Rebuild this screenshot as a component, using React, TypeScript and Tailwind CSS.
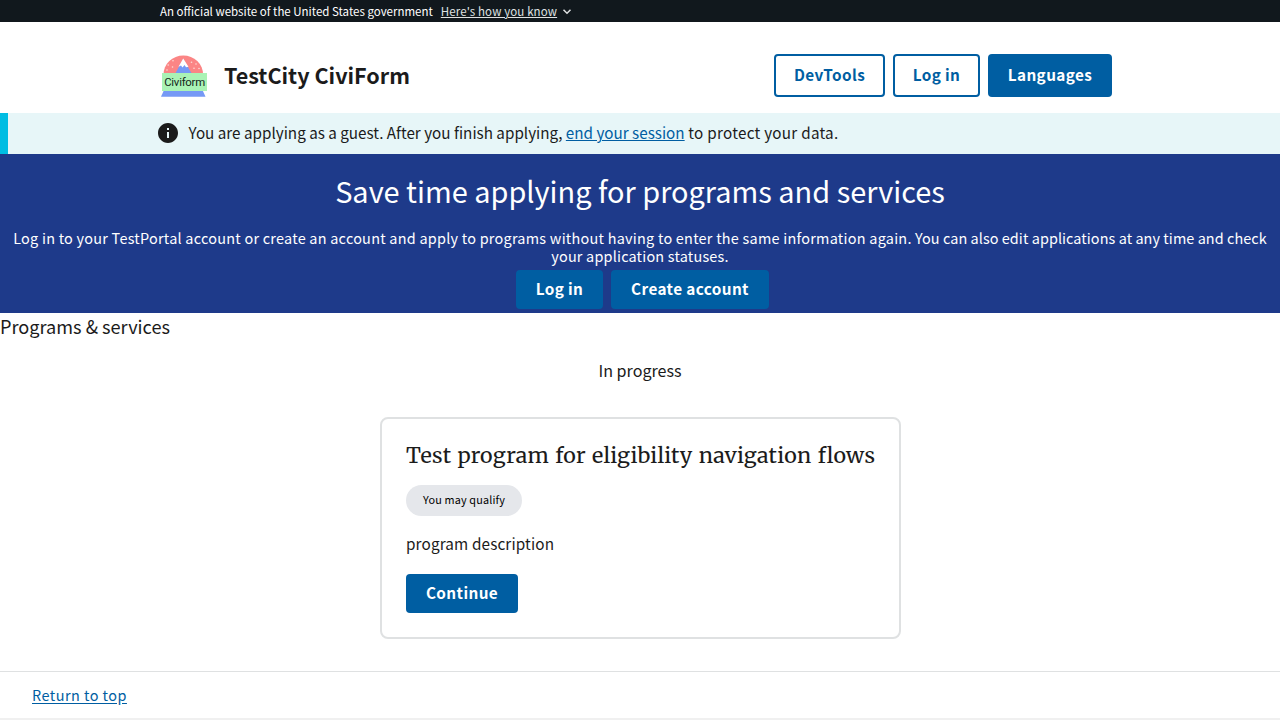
import type { ReactNode } from "react";

function Button({ children, outline = false, className = "" }: { children: ReactNode; outline?: boolean; className?: string }) {
  return (
    <button
      type="button"
      className={`flex items-center justify-center rounded-[4px] pb-[2px] text-[15.3px] leading-none font-bold tracking-[0.4px] whitespace-nowrap ${
        outline ? "border-2 border-[#005ea2] bg-white text-[#005ea2]" : "bg-[#005ea2] text-white"
      } ${className}`}
    >
      {children}
    </button>
  );
}

function Logo() {
  return (
    <svg className="h-[43px] w-12 shrink-0" viewBox="0 0 48 43" role="img" aria-label="CiviForm">
      <path d="M3.5 20.5a19.8 19 0 0 1 39.6 0z" fill="#fb8585" />
      <g fill="#fcdcd6">
        <circle cx="13" cy="6.8" r=".8" />
        <circle cx="8.2" cy="11" r=".8" />
        <circle cx="12.5" cy="13" r=".8" />
        <circle cx="7" cy="16" r=".8" />
        <circle cx="31.5" cy="8.2" r=".8" />
        <circle cx="36" cy="10" r=".8" />
        <circle cx="34" cy="14.3" r=".8" />
        <circle cx="39" cy="14.5" r=".8" />
      </g>
      <path d="M15 20 23.2 5 32 20z" fill="#7699f5" />
      <path d="M23.2 4.5 18.5 12.8 21 11.5 22.5 13.5 24.5 11 26 13.3 28.5 12.8z" fill="#fff" />
      <path d="M4 36h38.5l3 6.7h-44.5z" fill="#7699f5" />
      <path d="M2 19h45v18H2z" fill="#aaf3b5" />
      <text x="4.2" y="31.6" fontSize="11.4" textLength="41" fill="#15251a" className="font-['Roboto','Liberation_Sans',sans-serif]">
        Civiform
      </text>
    </svg>
  );
}

export default function App() {
  return (
    <div className="flex h-[720px] flex-col overflow-hidden bg-white font-['Noto_Sans_CJK_SC',sans-serif] text-[#1b1b1b]">
      <div className="flex h-[22px] items-center gap-2 bg-[#11181d] pl-40 text-[11.5px] leading-[22px] whitespace-nowrap text-white">
        <span>An official website of the United States government</span>
        <span className="flex items-center">
          <a href="#" className="tracking-[0.12px] text-[#dfe1e2] underline underline-offset-1">Here's how you know</a>
          <svg className="ml-1 size-3" viewBox="0 0 12 12" fill="none" stroke="#dfe1e2" strokeWidth="1.5">
            <path d="M2.5 4.7 6 8.2l3.5-3.5" />
          </svg>
        </span>
      </div>

      <header className="flex h-[91px] items-start justify-between pt-8 pr-[168px] pl-40">
        <div className="flex h-[43px] items-center gap-4">
          <Logo />
          <span className="pb-[2px] text-[21.55px] leading-none font-bold">TestCity CiviForm</span>
        </div>
        <nav className="flex gap-2">
          <Button outline className="h-[43px] w-[111px]">DevTools</Button>
          <Button outline className="h-[43px] w-[87px]">Log in</Button>
          <Button className="h-[43px] w-[124px]">Languages</Button>
        </nav>
      </header>

      <section className="flex h-[41px] items-start border-l-8 border-[#00bde3] bg-[#e7f6f8] pt-2 pl-[148px]">
        <svg className="size-6 shrink-0" viewBox="0 0 24 24" fill="#1b1b1b">
          <path d="M12 2C6.48 2 2 6.48 2 12s4.48 10 10 10 10-4.48 10-10S17.52 2 12 2zm1 15h-2v-6h2v6zm0-8h-2V7h2v2z" />
        </svg>
        <p className="-mt-px ml-[8.5px] text-[15.24px] leading-[24px] whitespace-nowrap">
          You are applying as a guest. After you finish applying,{" "}
          <a href="#" className="text-[#005ea2] underline underline-offset-1">end your session</a>
          <span className="tracking-[0.26px]"> to protect your data.</span>
        </p>
      </section>

      <section className="h-[159px] bg-[#1e3a8a] text-center text-white">
        <h1 className="pt-[18px] text-[28.92px] leading-9">Save time applying for programs and services</h1>
        <p className="mt-[21px] text-[14.44px] leading-[18px] tracking-[0.19px] whitespace-nowrap">
          <span className="tracking-[0.24px]">
            Log in to your TestPortal account or create an account and apply to programs without having to enter the same information again.
          </span>
          <span className="tracking-[0.06px]"> You can also edit applications at any time and check</span>
          <br />
          your application statuses.
        </p>
        <div className="mt-[5px] flex justify-center gap-2 pl-[5px]">
          <Button className="h-[39px] w-[87px]">Log in</Button>
          <Button className="h-[39px] w-[158px]">Create account</Button>
        </div>
      </section>

      <main className="flex flex-col">
        <h2 className="h-7 text-[18.15px] leading-[26px]">Programs & services</h2>
        <h3 className="mt-4 h-7 text-center text-[16.08px] leading-[26px]">In progress</h3>
        <article className="mt-8 ml-[380px] flex h-[222px] w-[521px] flex-col items-start rounded-lg border-2 border-[#dfe1e2] px-6 pt-6">
          <h4 className="h-[26px] font-['Merriweather','Noto_Serif','DejaVu_Serif',serif] text-[21.44px] leading-[26px] font-normal tracking-[0.2px] [word-spacing:1px] whitespace-nowrap">
            Test program for eligibility navigation flows
          </h4>
          <span className="mt-4 flex h-[31px] w-[116px] items-center justify-center rounded-full bg-[#e5e7eb] pb-[2px] text-[10.83px] leading-none tracking-[0.16px] text-black">
            You may qualify
          </span>
          <p className="mt-4 h-[26px] text-[15.3px] leading-[22px] tracking-[0.13px]">program description</p>
          <Button className="mt-4 h-[39px] w-28">Continue</Button>
        </article>
      </main>

      <footer className="mt-8 flex h-[47px] shrink-0 items-center border-t border-[#dfe1e2] pl-8">
        <a href="#" className="text-[14.44px] leading-5 tracking-[0.47px] text-[#005ea2] underline underline-offset-2">Return to top</a>
      </footer>
      <div className="h-0.5 bg-[#f0f0f0]" />
    </div>
  );
}
